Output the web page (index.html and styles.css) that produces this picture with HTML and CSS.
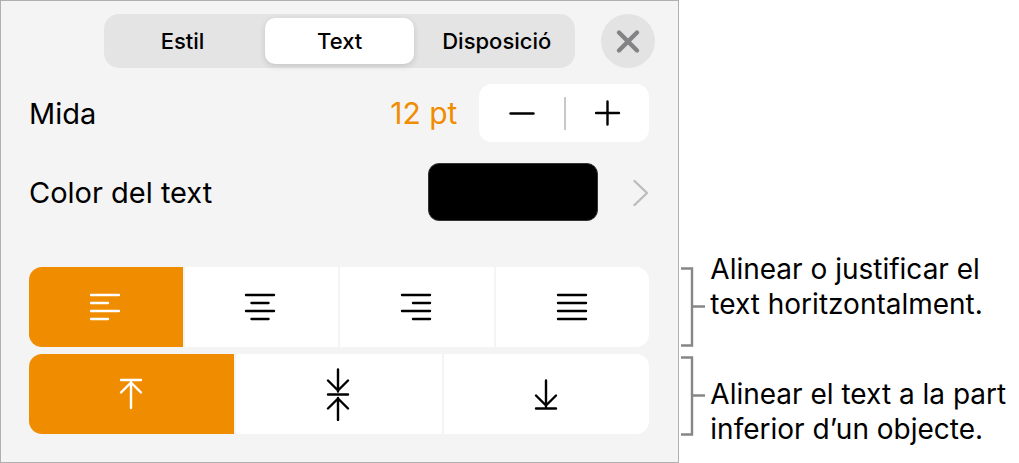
FILE: index.html
```
<!DOCTYPE html>
<html lang="ca">
<head>
  <meta charset="UTF-8" />
  <meta name="viewport" content="width=device-width, initial-scale=1.0" />
  <title>Text</title>
  <link rel="stylesheet" href="styles.css">
</head>
<body>
  <div class="figure">
    <section class="panel">
      <!-- Tabs -->
      <div class="panel-header">
        <div class="tabs" role="tablist">
          <button class="tab" role="tab" aria-selected="false">Estil</button>
          <button class="tab active" role="tab" aria-selected="true">Text</button>
          <button class="tab" role="tab" aria-selected="false">Disposició</button>
        </div>
        <button class="close-button" aria-label="Tancar">
          <svg width="54" height="54" viewBox="0 0 54 54"><path d="M18 18.5 36 36.500M36 18.500 18 36.500" /></svg>
        </button>
      </div>

      <!-- Size -->
      <div class="row">
        <span class="row-label">Mida</span>
        <span class="size-value">12 pt</span>
        <div class="stepper">
          <button class="step" aria-label="Reduir">
            <svg width="26" height="26" viewBox="0 0 26 26"><path d="M1.5 13.500h23" /></svg>
          </button>
          <button class="step" aria-label="Augmentar">
            <svg width="26" height="26" viewBox="0 0 26 26"><path d="M1 13h23M12.5 1.5v23" /></svg>
          </button>
        </div>
      </div>

      <!-- Color -->
      <div class="row">
        <span class="row-label">Color del text</span>
        <button class="swatch" aria-label="Color del text"></button>
        <svg class="chevron" width="16" height="28" viewBox="0 0 16 28"><path d="M1.5 3 14 15 1.5 27" /></svg>
      </div>

      <!-- Alignment -->
      <div class="align-groups">
        <div class="align-group">
          <button class="align-button active" aria-label="Esquerra">
            <svg width="32" height="30" viewBox="0 0 32 30"><path d="M2 3h28M2 11h17M2 19h28M2 27h17" /></svg>
          </button>
          <button class="align-button" aria-label="Centre">
            <svg width="32" height="30" viewBox="0 0 32 30"><path d="M2 3h28M7.5 11h17M2 19h28M7.5 27h17" /></svg>
          </button>
          <button class="align-button" aria-label="Dreta">
            <svg width="32" height="30" viewBox="0 0 32 30"><path d="M2 3h28M13 11h17M2 19h28M13 27h17" /></svg>
          </button>
          <button class="align-button" aria-label="Justificar">
            <svg width="32" height="30" viewBox="0 0 32 30"><path d="M2 3h28M2 11h28M2 19h28M2 27h28" /></svg>
          </button>
        </div>
        <div class="align-group">
          <button class="align-button active" aria-label="Superior">
            <svg width="24" height="54" viewBox="0 0 24 54"><path d="M2 13h20M12 15v26M2 25.5 12 15.5l10 10" /></svg>
          </button>
          <button class="align-button" aria-label="Mig">
            <svg width="24" height="54" viewBox="0 0 24 54"><path d="M2 27.500h20M12 2.500v22M2 13.500 12 23.500l10-10M12 53V31M2 41.500 12 31.500l10 10" /></svg>
          </button>
          <button class="align-button" aria-label="Inferior">
            <svg width="24" height="54" viewBox="0 0 24 54"><path d="M2 41.5h20M12 13.500v26M2 28.500l10 10 10-10" /></svg>
          </button>
        </div>
      </div>
    </section>

    <aside class="callouts">
      <div class="callout callout-horizontal">
        <svg class="bracket" width="25" height="80" viewBox="0 0 25 80"><path d="M1 1.5h11v77H1M12 39.5h13" /></svg>
        <p>Alinear o justificar el<br>text horitzontalment.</p>
      </div>
      <div class="callout callout-vertical">
        <svg class="bracket" width="25" height="80" viewBox="0 0 25 80"><path d="M1 1.5h11v77H1M12 39.5h13" /></svg>
        <p>Alinear el text a la part<br>inferior d’un objecte.</p>
      </div>
    </aside>
  </div>
</body>
</html>
```
FILE: styles.css
```
* {
  margin: 0;
  padding: 0;
  box-sizing: border-box;
}

body {
  background: #fff;
  color: #000;
  font-family: Inter, "Liberation Sans", sans-serif;
}

button {
  border: none;
  background: none;
  color: inherit;
  font: inherit;
  cursor: pointer;
}

svg {
  display: block;
  flex: none;
  fill: none;
  stroke: currentColor;
  stroke-width: 2.4;
  stroke-linecap: round;
  stroke-linejoin: round;
}

.figure {
  display: grid;
  grid-template-columns: 2fr 1fr;
}

.panel {
  padding: 13px 29px 28px 28px;
  border: 1px solid #b0b0b0;
  background: #f4f4f4;
}

/* Tabs and close button */
.panel-header {
  display: flex;
  gap: 26px;
  margin: 0 -6px 16px 75px;
}

.tabs {
  flex: 1;
  display: grid;
  grid-template-columns: repeat(3, 1fr);
  gap: 8px;
  height: 54px;
  padding: 4px;
  border-radius: 15px;
  background: #e4e4e4;
}

.tab {
  border-radius: 10px;
  font-size: 22px;
  font-weight: 500;
}

.tab.active {
  background: #fff;
  box-shadow: 0 2px 6px rgba(0, 0, 0, 0.14);
}

.close-button {
  width: 54px;
  height: 54px;
  border-radius: 50%;
  background: #e3e3e4;
  color: #838386;
}

.close-button svg {
  stroke-width: 4.4;
}

/* Rows */
.row {
  display: flex;
  align-items: center;
  height: 58px;
  margin-bottom: 21px;
  font-size: 29px;
}

.row-label {
  flex: 1;
}

.size-value {
  margin-right: 22px;
  color: #f08c00;
  font-size: 30px;
}

.stepper {
  display: flex;
  width: 170px;
  height: 58px;
  border-radius: 13px;
  background: #fff;
}

.step {
  flex: 1;
  display: flex;
  align-items: center;
  justify-content: center;
}

/* short divider between the two steps */
.step + .step::before {
  content: "";
  width: 2px;
  height: 33px;
  margin-right: auto;
  background: #c8c8ca;
}

.step + .step svg {
  margin-right: auto;
}

.swatch {
  width: 170px;
  height: 58px;
  margin-right: 35px;
  border: 1px solid #333;
  border-radius: 11px;
  background: #000;
}

.chevron {
  color: #bcbcbe;
}

/* Alignment buttons */
.align-groups {
  display: grid;
  gap: 7px;
  margin-top: 46px;
}

.align-group {
  display: grid;
  grid-auto-flow: column;
  grid-auto-columns: 1fr;
  gap: 2px;
  height: 80px;
  border-radius: 13px;
  overflow: hidden;
}

.align-button {
  display: flex;
  align-items: center;
  justify-content: center;
  padding-right: 2px;
  background: #fff;
}

.align-button.active {
  background: #f08c00;
  color: #fff;
}

/* Callouts */
.callouts {
  display: flex;
  flex-direction: column;
  justify-content: flex-end;
  gap: 9px;
  padding-bottom: 16px;
}

.callout {
  display: flex;
  gap: 5px;
  padding-left: 1px;
  font-size: 28px;
  line-height: 35px;
  white-space: nowrap;
}

.callout-horizontal {
  height: 95px;
}

.callout-horizontal .bracket {
  align-self: flex-end;
}

.callout-vertical {
  height: 91px;
}

.callout-vertical p {
  align-self: flex-end;
}

.bracket {
  color: #868686;
  stroke-linecap: butt;
  stroke-linejoin: miter;
}
```
